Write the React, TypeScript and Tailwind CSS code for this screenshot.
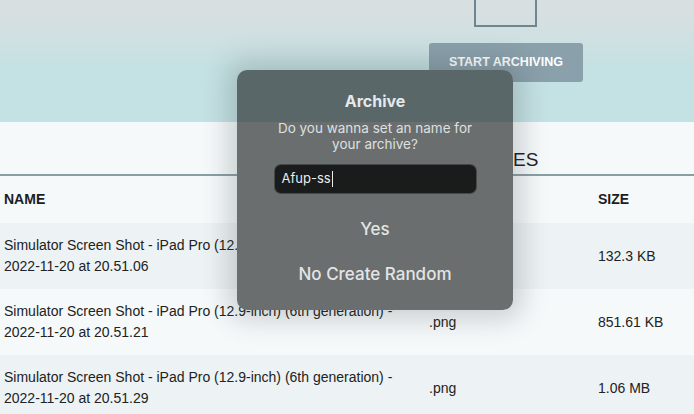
const ROWS = [
  { name: "Simulator Screen Shot - iPad Pro (12.9-inch) (6th generation) - 2022-11-20 at 20.51.06", type: ".png", size: "132.3 KB" },
  { name: "Simulator Screen Shot - iPad Pro (12.9-inch) (6th generation) - 2022-11-20 at 20.51.21", type: ".png", size: "851.61 KB" },
  { name: "Simulator Screen Shot - iPad Pro (12.9-inch) (6th generation) - 2022-11-20 at 20.51.29", type: ".png", size: "1.06 MB" },
];

export default function App() {
  return (
    <div className="relative h-[414px] w-[694px] overflow-hidden bg-[#f5f9fa] font-['Liberation_Sans',Arial,sans-serif]">
      {/* Upload header */}
      <div className="flex h-[122px] flex-col items-start bg-[linear-gradient(to_bottom,#d8dfe1_12px,#c4e1e3_70px)] pl-[429px]">
        <div className="ml-[45px] mt-[-13px] flex h-[40px] w-[63px] justify-center border-2 border-[#6f8590]">
          <div className="h-[3px] w-[21px] bg-[#a9b6bb]" />
        </div>
        <button className="mt-[16px] h-[39px] w-[154px] rounded-[3px] bg-[#8aa0ab] text-[12.5px] font-bold text-white">
          START ARCHIVING
        </button>
      </div>

      {/* Files table */}
      <div className="h-[54px] border-b-2 border-[#8a9ea6] pl-[380px] pt-[28px] text-[19px] leading-[20px] text-[#1d1d1d]">
        SELECTED FILES
      </div>
      <div className="grid h-[47px] grid-cols-[429px_169px_1fr] items-center text-[14px] font-bold text-[#1d1d1d]">
        <div className="pl-1">NAME</div>
        <div>TYPE</div>
        <div>SIZE</div>
      </div>
      {ROWS.map((row, i) => (
        <div
          key={row.size}
          className={`grid h-[66px] grid-cols-[429px_169px_1fr] items-center text-[14px] leading-[21px] text-[#222] ${
            i % 2 === 0 ? "bg-[#edf2f4]" : "bg-[#f5f9fa]"
          }`}
        >
          <div className="pl-1 pr-[22px]">{row.name}</div>
          <div>{row.type}</div>
          <div>{row.size}</div>
        </div>
      ))}

      {/* Archive dialog */}
      <div className="absolute left-[237px] top-[70px] flex h-[240px] w-[276px] flex-col items-center rounded-[10px] bg-[linear-gradient(to_bottom,#596769_52px,#6b6e6e_52px)] pt-[21px] font-['Inter',sans-serif] shadow-[0_0_26px_10px_rgba(60,70,75,0.22)]">
        <h2 className="text-[16px] font-bold leading-[20px] text-[#e6e9e9]">Archive</h2>
        <p className="mt-[9px] text-center text-[13.5px] leading-[16px] text-[#dce0e0]">
          Do you wanna set an name for
          <br />
          your archive?
        </p>
        <div className="mt-[12px] flex h-[30px] w-[203px] items-center rounded-[7px] border border-[#8a8f90]/40 bg-[#1a1c1c] pl-[7px] text-[13px] text-[#ececec]">
          Afup-ss
          <span className="ml-[1px] h-[16px] w-px bg-[#ececec]" />
        </div>
        <button className="mt-[25px] text-[17px] font-medium leading-[20px] text-[#e2e5e5]">Yes</button>
        <button className="mt-[25px] text-[17px] font-medium leading-[20px] text-[#e2e5e5]">No Create Random</button>
      </div>
    </div>
  );
}
